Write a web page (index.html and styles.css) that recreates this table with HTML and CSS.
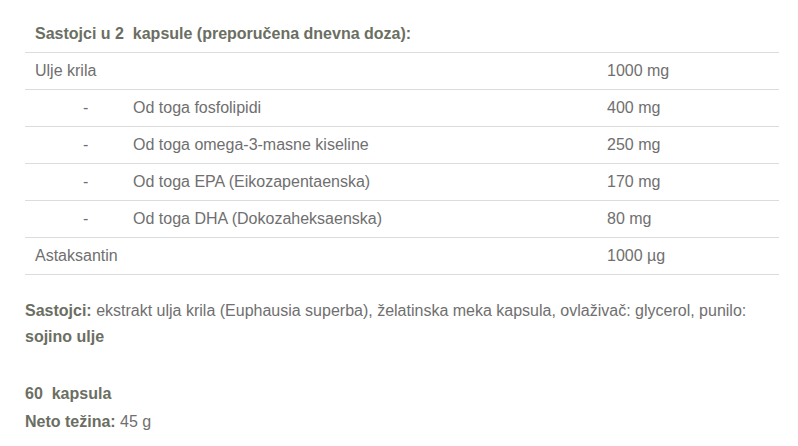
FILE: index.html
```html
<!DOCTYPE html>
<html lang="hr">
<head>
<meta charset="utf-8">
<link rel="stylesheet" href="styles.css">
</head>
<body>
<div class="page">
  <table class="ing">
    <colgroup><col class="c1"><col class="c2"><col class="c3"></colgroup>
    <tr class="head"><th colspan="3">Sastojci u 2&nbsp; kapsule (preporučena dnevna doza):</th></tr>
    <tr><td colspan="2">Ulje krila</td><td>1000 mg</td></tr>
    <tr><td class="dash">-</td><td>Od toga fosfolipidi</td><td>400 mg</td></tr>
    <tr><td class="dash">-</td><td>Od toga omega-3-masne kiseline</td><td>250 mg</td></tr>
    <tr><td class="dash">-</td><td>Od toga EPA (Eikozapentaenska)</td><td>170 mg</td></tr>
    <tr><td class="dash">-</td><td>Od toga DHA (Dokozaheksaenska)</td><td>80 mg</td></tr>
    <tr><td colspan="2">Astaksantin</td><td>1000 µg</td></tr>
  </table>
  <p class="txt"><b>Sastojci:</b> ekstrakt ulja krila (Euphausia superba), želatinska meka kapsula, ovlaživač: glycerol, punilo: <b>sojino ulje</b></p>
  <p class="txt gap"><b>60&nbsp; kapsula</b><br><b>Neto težina:</b> 45 g</p>
</div>
</body>
</html>
```
FILE: styles.css
```css
html, body { margin: 0; padding: 0; background: #fff; }
body {
  font-family: "Liberation Sans", Arial, sans-serif;
  font-size: 16px;
  color: #6f6f6f;
}
.page { padding: 16px 19px 0 25px; }
.ing { width: 754px; border-collapse: collapse; table-layout: fixed; }
.c1 { width: 98px; }
.c2 { width: 474px; }
.c3 { width: 182px; }
.ing th, .ing td {
  height: 36px;
  padding: 0 10px;
  text-align: left;
  vertical-align: middle;
  border-bottom: 1px solid #dcdcdc;
}
.ing th { font-weight: bold; color: #6b6e62; }
.ing td.dash { padding-left: 58px; }
b { color: #6b6e62; }
.txt { margin: 0; line-height: 26px; width: 754px; }
.ing + .txt { margin-top: 23px; }
.gap { margin-top: 30px; line-height: 28px; }
```
